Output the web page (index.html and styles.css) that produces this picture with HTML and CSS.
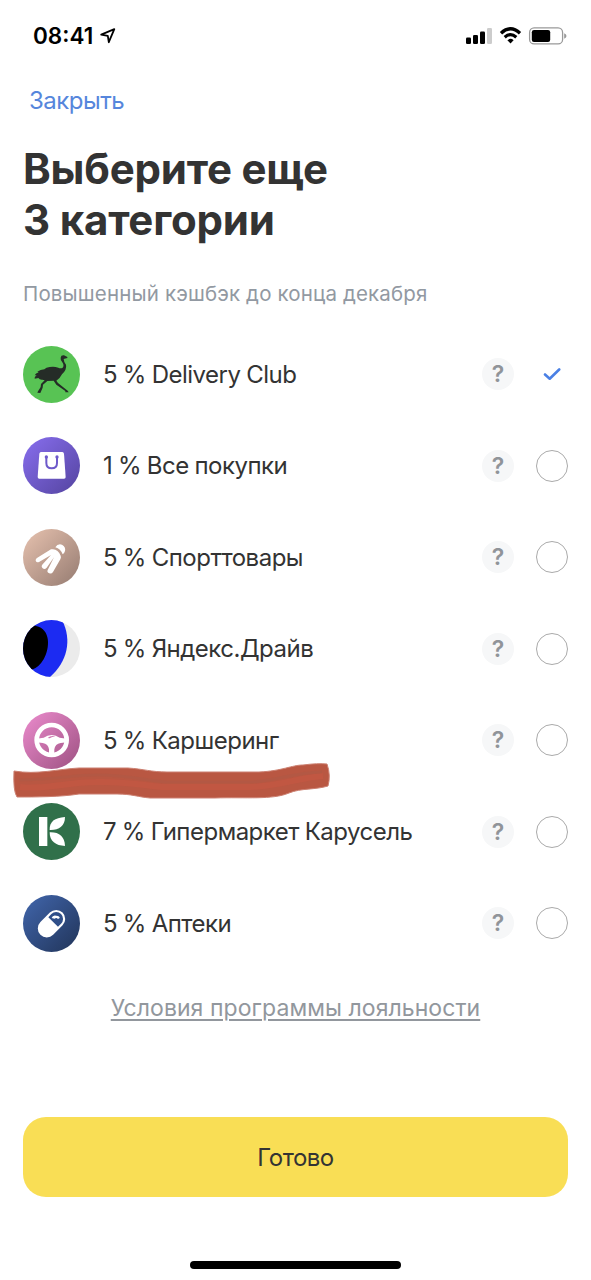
FILE: index.html
```html
<!DOCTYPE html>
<html lang="ru">
<head>
<meta charset="utf-8">
<title>Категории кэшбэка</title>
<link rel="stylesheet" href="styles.css">
</head>
<body>
<main class="screen">
  <header class="status">
    <span class="time">08:41</span>
    <svg class="arrow" width="16" height="16" viewBox="0 0 16 16"><path d="M1.2 6.7 L14.3 1.2 L8.8 14.2 L7.8 7.8 Z" fill="none" stroke="#000" stroke-width="1.8" stroke-linejoin="round"/></svg>
    <svg class="indicators" width="102" height="20" viewBox="0 0 102 20">
      <rect x="1" y="11.5" width="5" height="6.5" rx="1.3"/>
      <rect x="8" y="9" width="5" height="9" rx="1.3"/>
      <rect x="15" y="5.5" width="5" height="12.5" rx="1.3"/>
      <rect x="22" y="2" width="5" height="16" rx="1.3" fill="#ccc"/>
      <path d="M36 7.2 Q45.5 -1.6 55 7.2" fill="none" stroke="#000" stroke-width="3.4"/>
      <path d="M39.7 11.2 Q45.5 6 51.3 11.2" fill="none" stroke="#000" stroke-width="3.2"/>
      <path d="M42.4 14.2 Q45.5 11.5 48.6 14.2 L45.5 17.4 Z"/>
      <rect x="64.6" y="1.9" width="33" height="16" rx="4.5" fill="none" stroke="#999" stroke-width="1.3"/>
      <rect x="66.8" y="4" width="18.4" height="12" rx="2.2"/>
      <path d="M99.2 7.2 Q101.5 8.2 101.5 10 Q101.5 11.8 99.2 12.8 Z" fill="#999"/>
    </svg>
  </header>
  <a class="close">Закрыть</a>
  <h1 class="title">Выберите еще<br>3 категории</h1>
  <p class="subtitle">Повышенный кэшбэк до конца декабря</p>

  <ul class="list">
    <li class="row">
      <svg class="icon" viewBox="39 33 171 171">
        <circle cx="124.5" cy="118.5" r="85.5" fill="#58c354"/>
        <path d="M172 66 L162 61 Q153 60 152 68 Q151 74 156 80 Q164 91 158 98 Q152 101 145 98 Q132 93 119 96 Q108 97 103 103 Q91 104 82 110 L86 112 Q77 115 74 121 L80 121 Q72 126 74 131 L85 129 Q89 135 97 134 L104 136 L93 147 L92 156 L84 169 L82 173 L91 174 L98 158 L99 149 L112 138 L131 137 L139 149 L166 168 L166 172 L176 172 L173 167 L144 144 L139 137 Q151 129 156 118 Q171 103 168 89 Q161 79 161 72 L172 69 Z" fill="#252c27"/>
      </svg>
      <span class="name">5 % Delivery Club</span><span class="help">?</span>
      <span class="mark"><svg width="18" height="14" viewBox="0 0 18 14"><path d="M2 7.5 L6.7 11.7 L16.2 2.5" fill="none" stroke="#4a80e5" stroke-width="2.6" stroke-linecap="round" stroke-linejoin="round"/></svg></span>
    </li>
    <li class="row">
      <svg class="icon" viewBox="39 307 171 171">
        <defs><linearGradient id="violet" x2="1" y2="1"><stop offset=".1" stop-color="#836ae7"/><stop offset=".9" stop-color="#5948a7"/></linearGradient></defs>
        <circle cx="124.5" cy="392.5" r="85.5" fill="url(#violet)"/>
        <path d="M93 352 H157 Q161 352 162 357 L167 427 Q167 432 162 432 H88 Q83 432 83 427 L88 357 Q89 352 93 352 Z" fill="#fff"/>
        <path d="M109 368 V385 Q109 401 125 401 Q141 401 141 385 V368" fill="none" stroke="#6d59ca" stroke-width="6"/>
        <circle cx="109" cy="367" r="5" fill="#6d59ca"/><circle cx="141" cy="367" r="5" fill="#6d59ca"/>
      </svg>
      <span class="name">1 % Все покупки</span><span class="help">?</span><span class="mark radio"></span>
    </li>
    <li class="row">
      <svg class="icon" viewBox="39 26 171 171">
        <defs><linearGradient id="sand" x2="1" y2="1"><stop offset=".1" stop-color="#dfbba9"/><stop offset=".9" stop-color="#9d8277"/></linearGradient></defs>
        <circle cx="124.5" cy="111.5" r="85.5" fill="url(#sand)"/>
        <g fill="#fff">
          <path d="M136 81 Q143 69 156 73 Q168 80 165 92 Q163 99 158 102 Q152 86 136 81 Z"/>
          <path d="M123 87 Q143 83 152 106 Q154 111 151 117 L129 155 Q125 161 118 159 Q110 156 113 149 L132 111 L110 142 Q104 149 98 144 Q92 139 98 132 L123 104 L87 125 Q80 128 77 121 Q76 115 82 112 Z"/>
        </g>
      </svg>
      <span class="name">5 % Спорттовары</span><span class="help">?</span><span class="mark radio"></span>
    </li>
    <li class="row">
      <svg class="icon" viewBox="39 300 171 171">
        <defs><clipPath id="disc"><circle cx="124.5" cy="385.5" r="85.5"/></clipPath></defs>
        <g clip-path="url(#disc)">
          <path d="M39 300 H210 V471 H39 Z" fill="#ebebeb"/>
          <path d="M39 300 H156 C187 360 172 425 120 471 H39 Z" fill="#1c2bf2"/>
          <path d="M39 300 L78 318 C123 327 120 384 101 418 Q85 445 65 449 L39 471 Z" fill="#000"/>
        </g>
      </svg>
      <span class="name">5 % Яндекс.Драйв</span><span class="help">?</span><span class="mark radio"></span>
    </li>
    <li class="row">
      <svg class="icon" viewBox="39 35 171 171">
        <defs><linearGradient id="pink" x2="1" y2="1"><stop offset=".1" stop-color="#e486c6"/><stop offset=".9" stop-color="#a55789"/></linearGradient></defs>
        <circle cx="124.5" cy="120.5" r="85.5" fill="url(#pink)"/>
        <circle cx="125" cy="119" r="45" fill="none" stroke="#fff" stroke-width="14"/>
        <path d="M80 115 L101 112 Q112 104 125 104 Q138 104 149 112 L170 115 V126 L152 128 Q135 131 133 147 V164 H117 V147 Q115 131 98 128 L80 126 Z" fill="#fff"/>
        <path d="M113 113 Q123 103 139 109 Q127 108 119 114 Z" fill="#cf76b0"/>
      </svg>
      <span class="name">5 % Каршеринг</span><span class="help">?</span><span class="mark radio"></span>
      <svg class="stroke" width="320" height="38" viewBox="0 0 320 38">
        <path d="M2 9 C25 13 46 7 67 6 H116 C132 7 139 10 155 10 H247 C270 9 280 3 291 3 Q306 1 315 2 Q319 13 316 24 C303 28 289 26 277 31 C261 38 233 35 203 36 H138 C126 35 120 32 105 32 H67 C49 35 23 35 5 35 Q1 29 2 9 Z" fill="#b95742" stroke="#cb7f70" stroke-width="1"/>
        <path d="M8 25 C35 28 55 20 84 20 C115 19 125 23 150 25 H238 C270 24 284 16 311 14" fill="none" stroke="#c65742" stroke-width="6" opacity=".6"/>
        <path d="M7 18 C41 18 58 13 85 13 C116 13 138 19 155 20 H241 C268 18 279 11 310 10" fill="none" stroke="#a95c48" stroke-width="3" opacity=".35"/>
      </svg>
    </li>
    <li class="row">
      <svg class="icon" viewBox="39 309 171 171">
        <circle cx="124.5" cy="394.5" r="85.5" fill="#30704a"/>
        <g fill="#fff"><path d="M87 351 H112 V438 H87 Z"/><path d="M119 390 C118 365 134 353 165 351 C165 379 146 391 119 390 Z"/><path d="M119 397 C148 396 164 410 165 438 C137 437 119 424 119 397 Z"/></g>
      </svg>
      <span class="name">7 % Гипермаркет Карусель</span><span class="help">?</span><span class="mark radio"></span>
    </li>
    <li class="row">
      <svg class="icon" viewBox="39 43 171 171">
        <defs><linearGradient id="navy" x2="1" y2="1"><stop offset=".1" stop-color="#3e61a4"/><stop offset=".9" stop-color="#243961"/></linearGradient></defs>
        <circle cx="124.5" cy="128.5" r="85.5" fill="url(#navy)"/>
        <g transform="rotate(45 124.5 129)">
          <rect x="97.5" y="82" width="54" height="94" rx="27" fill="#fff"/>
          <path d="M104 122 V109 A20.5 20.5 0 0 1 145 109 V122 Z" fill="#304f89"/>
        </g>
        <path d="M125 112 Q128 102 139 105 Q150 106 149 112 L144 115 Q139 110 134 114 Z" fill="#fff"/>
      </svg>
      <span class="name">5 % Аптеки</span><span class="help">?</span><span class="mark radio"></span>
    </li>
  </ul>

  <a class="terms">Условия программы лояльности</a>
  <button class="done">Готово</button>
  <div class="home"></div>
</main>
</body>
</html>
```
FILE: styles.css
```css
* { box-sizing: border-box; }
body { margin: 0; background: #fff; font-family: Inter, "Liberation Sans", sans-serif; color: #333; }
.screen { height: 1280px; padding: 0 23px; display: flex; flex-direction: column; overflow: hidden; }
.status { height: 86px; flex: none; display: flex; align-items: flex-start; padding: 22px 1px 0 10px; color: #000; }
.time { font-size: 22.5px; line-height: 28px; font-weight: 600; letter-spacing: 0; width: 67px; white-space: nowrap; }
.arrow { margin-top: 6px; }
.indicators { margin: 4px 0 0 auto; }
.close { display: block; height: 30px; padding-left: 6px; font-size: 24px; line-height: 30px; color: #5686dc; letter-spacing: -0.5px; }
.title { margin: 27px 0 0; font-size: 42px; line-height: 51px; font-weight: 700; letter-spacing: -0.2px; }
.subtitle { margin: 36px 0 0; font-size: 20.5px; line-height: 26px; color: #9299a2; letter-spacing: 0.15px; white-space: nowrap; }
.list { list-style: none; margin: 21.25px 0 0; padding: 0; }
.row { position: relative; height: 91.5px; display: flex; align-items: center; }
.icon { width: 57px; height: 57px; flex: none; }
.name { margin-left: 23px; padding-top: 1px; flex: 1; font-size: 24px; line-height: 30px; letter-spacing: -0.5px; word-spacing: -0.5px; white-space: nowrap; }
.help { width: 32px; height: 32px; border-radius: 50%; background: #f6f7f8; color: #909499; font-size: 23px; line-height: 33px; font-weight: 600; text-align: center; margin-right: 22px; }
.mark { width: 32px; height: 32px; display: flex; align-items: center; justify-content: center; }
.radio { border: 1.2px solid #aaa; border-radius: 50%; }
.stroke { position: absolute; left: -11px; top: 68px; z-index: 1; filter: blur(0.6px); }
.terms { align-self: center; margin-top: 23.75px; font-size: 23px; line-height: 30px; letter-spacing: 0.07px; color: #92979d; text-decoration: underline; text-decoration-thickness: 1.5px; text-underline-offset: 3px; white-space: nowrap; }
.done { margin-top: 94px; height: 80px; flex: none; border: 0; border-radius: 23px; background: #f9de55; color: #333; font: 400 24px/30px Inter, "Liberation Sans", sans-serif; letter-spacing: -0.5px; padding-top: 4px; }
.home { align-self: center; width: 211px; height: 8px; margin-top: 64px; border-radius: 4px; background: #000; flex: none; }
```
